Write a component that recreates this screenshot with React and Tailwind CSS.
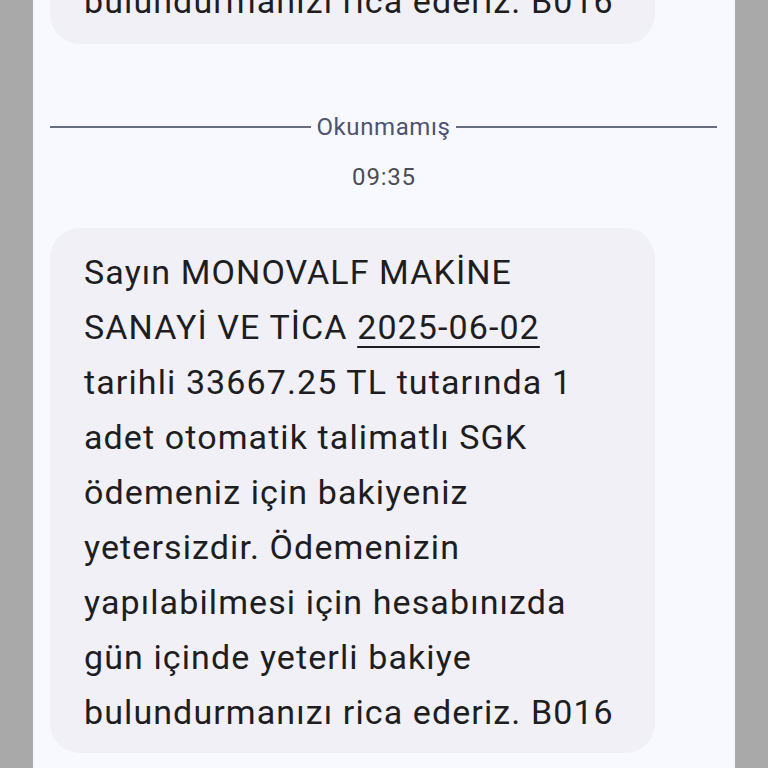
import React from 'react';

const lines = [
    <>Sayın MONOVALF MAKİNE</>,
    <>SANAYİ VE TİCA <span className='underline decoration-2 underline-offset-[7px]'>2025-06-02</span></>,
    <>tarihli 33667.25 TL tutarında 1</>,
    <>adet otomatik talimatlı SGK</>,
    <>ödemeniz için bakiyeniz</>,
    <>yetersizdir. Ödemenizin</>,
    <>yapılabilmesi için hesabınızda</>,
    <>gün içinde yeterli bakiye</>,
    <>bulundurmanızı rica ederiz. B016</>,
];

const Bubble = ({ children, className = '' }) => (
    <div className={`w-[605px] rounded-[30px] bg-[#f0f0f6] pl-[34px] pr-4 pt-[17px] pb-[13px] text-[34px] leading-[55px] tracking-[1.1px] text-[#1d1d22] ${className}`}>
        {children}
    </div>
);

const App = () => {
    return (
        <div className='h-[768px] w-[768px] overflow-hidden bg-[#a9a9a9] font-["Roboto",sans-serif]'>
            <div className='mx-auto flex h-full w-[702px] flex-col bg-[#f8f9fe] px-[17px]'>
                <Bubble className='-mt-[43px] pb-[15px]'>
                    <p className='whitespace-nowrap'>bulundurmanızı rica ederiz. B016</p>
                </Bubble>

                <div className='mt-[69px] flex items-center gap-[5px] pr-px'>
                    <div className='h-[2px] flex-1 bg-[#676c80]'></div>
                    <p className='text-[24px] leading-[28px] tracking-[0.6px] text-[#4d5370]'>Okunmamış</p>
                    <div className='h-[2px] flex-1 bg-[#676c80]'></div>
                </div>

                <p className='mt-[22px] text-center text-[24px] leading-[28px] tracking-[0.8px] text-[#4a4d57]'>09:35</p>

                <Bubble className='mt-[37px]'>
                    {lines.map((line, index) => (
                        <p key={index} className='whitespace-nowrap'>{line}</p>
                    ))}
                </Bubble>
            </div>
        </div>
    );
};

export default App;
